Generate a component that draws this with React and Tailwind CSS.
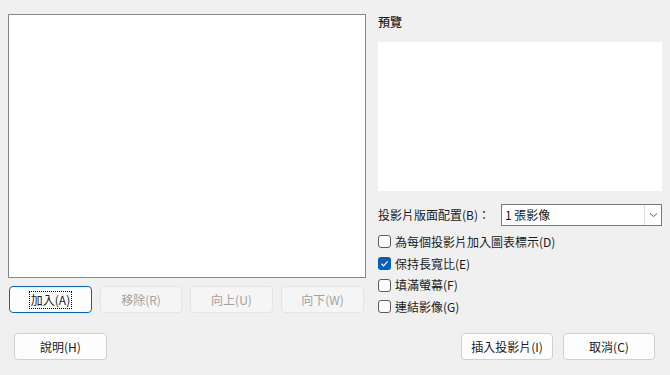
import React from 'react';

const font = { fontFamily: '"Noto Sans CJK TC", "Noto Sans", sans-serif' };

const Btn = ({ children, w = 'w-[83px]', disabled, primary }) => (
  <button
    className={
      'h-[27px] rounded-[4px] border text-[12px] leading-none flex items-center justify-center ' +
      w + ' ' +
      (disabled
        ? 'bg-[#f5f5f5] border-[#e5e5e5] text-[#a2a2a2]'
        : primary
        ? 'bg-[#fdfdfd] border-[#0067c0] text-[#1a1a1a]'
        : 'bg-[#fdfdfd] border-[#d0d0d0] text-[#1a1a1a]')
    }
  >
    {primary ? (
      <span className="border border-dotted border-black px-px py-[2px]">{children}</span>
    ) : (
      children
    )}
  </button>
);

const Check = ({ label, checked }) => (
  <div className="h-[21.7px] flex items-center gap-[4px]">
    {checked ? (
      <span className="w-[13px] h-[13px] rounded-[3px] bg-[#005fb8] flex items-center justify-center">
        <svg width="9" height="9" viewBox="0 0 9 9">
          <path d="M1.5 4.8 L3.6 6.8 L7.6 2.4" stroke="white" strokeWidth="1.2" fill="none" />
        </svg>
      </span>
    ) : (
      <span className="w-[13px] h-[13px] rounded-[3px] border border-[#5c5c5c] bg-[#fbfbfb]" />
    )}
    <span className="text-[12px] text-[#1a1a1a]">{label}</span>
  </div>
);

const App = () => {
  return (
    <div className="w-[670px] h-[375px] bg-[#f0f0f0] flex flex-col overflow-hidden" style={font}>
      <div className="flex h-[320px]">
        <div className="pl-[8px] pt-[14px] w-[378px] shrink-0">
          <div className="w-[358px] h-[264px] bg-white border border-[#828790]" />
          <div className="flex gap-[8px] mt-[8px] pl-px">
            <Btn primary>加入(A)</Btn>
            <Btn disabled w="w-[82px]">移除(R)</Btn>
            <Btn disabled w="w-[83px]">向上(U)</Btn>
            <Btn disabled w="w-[83px]">向下(W)</Btn>
          </div>
        </div>
        <div className="w-[284px] flex flex-col">
          <div className="mt-[15px] h-[14px] leading-[14px] text-[12px] font-medium text-[#1a1a1a]">預覽</div>
          <div className="mt-[13px] h-[149px] bg-white" />
          <div className="mt-[13px] h-[22px] flex items-center">
            <span className="w-[123px] text-[12px] text-[#1a1a1a]">投影片版面配置(B)：</span>
            <div className="flex-1 h-[22px] bg-white border border-[#7a7a7a] flex items-center">
              <span className="flex-1 pl-[3px] text-[12px] text-[#1a1a1a]">1 張影像</span>
              <span className="w-[17px] h-full border-l border-[#dadada] flex items-center justify-center">
                <svg width="9" height="6" viewBox="0 0 9 6">
                  <path d="M1 1.5 L4.5 4.5 L8 1.5" stroke="#606060" strokeWidth="1" fill="none" />
                </svg>
              </span>
            </div>
          </div>
          <div className="mt-[5px] flex flex-col">
            <Check label="為每個投影片加入圖表標示(D)" />
            <Check label="保持長寬比(E)" checked />
            <Check label="填滿螢幕(F)" />
            <Check label="連結影像(G)" />
          </div>
        </div>
      </div>
      <div className="flex items-start mt-[13px] px-[14px]">
        <Btn w="w-[93px]">說明(H)</Btn>
        <div className="flex-1" />
        <div className="flex gap-[10px] mr-px">
          <Btn w="w-[92px]">插入投影片(I)</Btn>
          <Btn w="w-[92px]">取消(C)</Btn>
        </div>
      </div>
    </div>
  );
};

export default App;
